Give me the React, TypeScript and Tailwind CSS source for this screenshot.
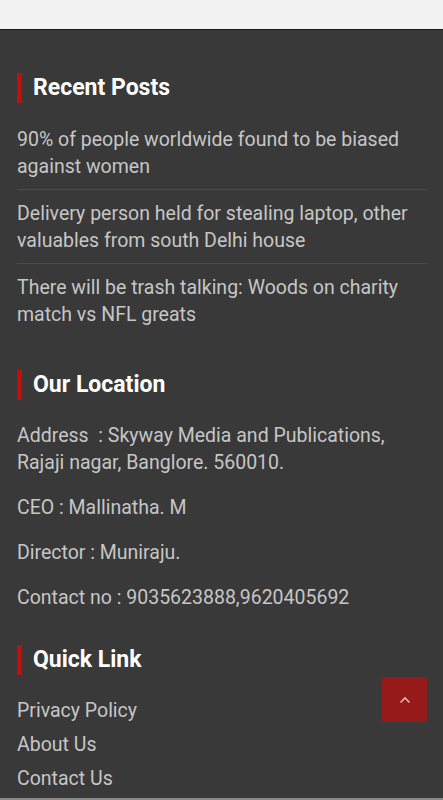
import React from "react";

const Heading = ({ children }: { children: React.ReactNode }) => (
  <div className="flex items-center h-[30px]">
    <div className="w-[5px] h-[30px] bg-[#c10f0f]" />
    <h2 className="ml-[11px] text-[23px] leading-[30px] font-bold text-white">{children}</h2>
  </div>
);

export default function App() {
  const posts = [
    "90% of people worldwide found to be biased against women",
    "Delivery person held for stealing laptop, other valuables from south Delhi house",
    "There will be trash talking: Woods on charity match vs NFL greats",
  ];
  return (
    <div className="w-[443px] h-[800px] overflow-hidden bg-[#393939] relative" style={{ fontFamily: "Roboto, 'Liberation Sans', sans-serif" }}>
      <div className="h-[30px] bg-[#f2f2f2] border-b border-[#1c1c1c]" />
      <div className="px-[17px] pr-[16px] pt-[43px]">
        <Heading>Recent Posts</Heading>
        <ul className="mt-[13px]">
          {posts.map((p, i) => (
            <li
              key={i}
              className={`py-[9.5px] text-[19.5px] leading-[27px] text-[#c6c6c6] ${i < posts.length - 1 ? "border-b border-[#4b4b4b]" : ""}`}
            >
              {p}
            </li>
          ))}
        </ul>
        <div className="mt-[33px]">
          <Heading>Our Location</Heading>
        </div>
        <div className="mt-[22px] text-[19.5px] leading-[27px] text-[#c6c6c6] flex flex-col gap-[18px]">
          <p>Address&nbsp; : Skyway Media and Publications, Rajaji nagar, Banglore. 560010.</p>
          <p>CEO : Mallinatha. M</p>
          <p>Director : Muniraju.</p>
          <p>Contact no : 9035623888,9620405692</p>
        </div>
        <div className="mt-[34px]">
          <Heading>Quick Link</Heading>
        </div>
        <ul className="mt-[22px] text-[19.5px] leading-[27px] text-[#c6c6c6] flex flex-col gap-[7px]">
          <li>Privacy Policy</li>
          <li>About Us</li>
          <li>Contact Us</li>
        </ul>
      </div>
      <div className="absolute left-0 right-0 top-[798px] h-[2px] bg-[#8a8a8a]" />
      <button className="absolute left-[382px] top-[677px] w-[45px] h-[45px] rounded-[2px] bg-[#961a1a] flex items-center justify-center">
        <svg width="12" height="8" viewBox="0 0 12 8" fill="none">
          <path d="M1.5 6.5 L6 2 L10.5 6.5" stroke="#e8b4b4" strokeWidth="1.6" />
        </svg>
      </button>
    </div>
  );
}
